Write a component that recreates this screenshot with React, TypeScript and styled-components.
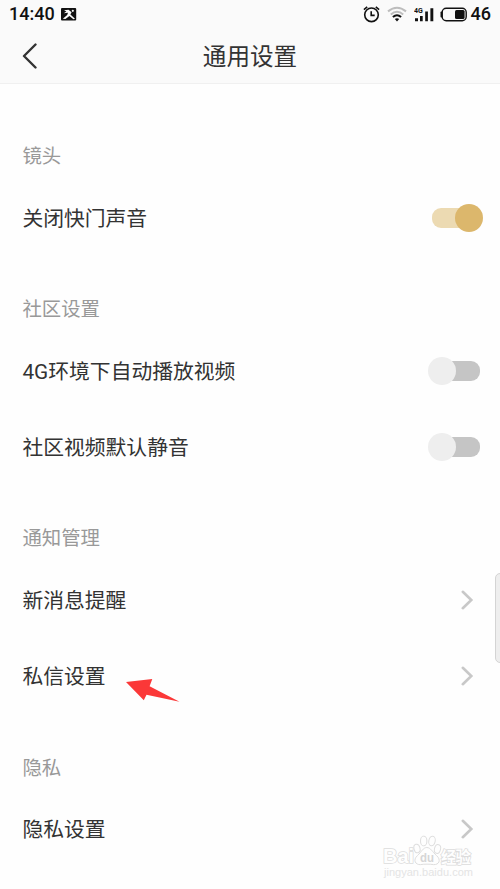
import React from "react";
import styled, { createGlobalStyle } from "styled-components";

const GlobalStyle = createGlobalStyle`
  * { box-sizing: border-box; }
  body {
    margin: 0;
    background: #fefefe;
    font-family: Roboto, "Noto Sans CJK SC", sans-serif;
    color: #333;
    overflow: hidden;
  }
  svg { display: block; flex: none; }
`;

const Screen = styled.div`
  position: relative;
  width: 500px;
  height: 889px;
  overflow: hidden;
  background: #fefefe;
`;

const Header = styled.header`
  height: 84px;
  background: #fafafa;
  border-bottom: 1px solid #f0f0f0;
`;

const StatusBar = styled.div`
  display: flex;
  align-items: center;
  justify-content: space-between;
  height: 28px;
  padding: 0 9px 0 9px;
  color: #111;
  font-size: 18px;
  font-weight: 500;
  line-height: 28px;
`;

const StatusGroup = styled.div<{ $gap: number }>`
  display: flex;
  align-items: center;
  gap: ${(p) => p.$gap}px;
`;

const TitleBar = styled.div`
  display: grid;
  grid-template-columns: 60px 1fr 60px;
  align-items: center;
  height: 55px;
`;

const BackButton = styled.button`
  border: 0;
  padding: 0 0 0 21px;
  background: none;
`;

const Title = styled.h1`
  margin: 0;
  padding-top: 3px;
  font-size: 23.6px;
  font-weight: 400;
  line-height: 36px;
  text-align: center;
`;

const List = styled.main`
  padding: 19.4px 17px 0 22.4px;
`;

const SectionLabel = styled.h2`
  height: 76.4px;
  margin: 0;
  padding-top: 30px;
  color: #999;
  font-size: 19.4px;
  font-weight: 400;
  line-height: 48.4px;
`;

const Row = styled.div`
  display: flex;
  align-items: center;
  justify-content: space-between;
  height: 76.4px;
  font-size: 20.8px;
  line-height: 32px;
`;

const RowLabel = styled.span`
  padding-top: 2px;
`;

const Track = styled.span<{ $on: boolean }>`
  display: flex;
  align-items: center;
  justify-content: ${(p) => (p.$on ? "flex-end" : "flex-start")};
  width: 48px;
  height: 20px;
  margin-right: 3.5px;
  border-radius: 9px;
  background: ${(p) => (p.$on ? "#ecdab2" : "#c5c5c5")};
`;

const Knob = styled.span<{ $on: boolean }>`
  flex: none;
  width: 28px;
  height: 28px;
  margin: ${(p) => (p.$on ? "0 -3.5px 0 0" : "0 0 0 -4px")};
  border-radius: 50%;
  background: ${(p) => (p.$on ? "#dcb76c" : "#eeeeee")};
`;

const ScrollHandle = styled.div`
  position: absolute;
  top: 573px;
  right: -8px;
  width: 13px;
  height: 90px;
  border: 1px solid #d4d4d4;
  border-radius: 5px;
  background: #eeeeee;
`;

const Pointer = styled.svg`
  position: absolute;
  top: 676px;
  left: 124px;
`;

const Watermark = styled.svg`
  position: absolute;
  top: 830px;
  left: 378px;
`;

const PhotoIcon = () => (
  <svg width="16" height="13" viewBox="0 0 16 13">
    <rect width="15.2" height="12.4" rx="1" fill="#111" />
    <path d="M3 2.2 7.5 1.8 10.6 4.2 9.4 6.6 14 10.8 12.4 11.2 8.4 8 4.4 11 1.8 10.8 6.2 7 7 4.8 2.8 5.2 5.4 3.6Z" fill="#fafafa" />
    <circle cx="11.8" cy="2.8" r="1.1" fill="#fafafa" />
  </svg>
);

const SpacedIcon = styled.svg`
  margin-right: 3px;
`;

const AlarmIcon = () => (
  <SpacedIcon width="17" height="17" viewBox="0 0 17 17" fill="none" stroke="#111" strokeWidth="1.6">
    <circle cx="8.5" cy="8.8" r="6.8" />
    <path d="M8.2 5.3V9.4H11.7M.9 3.6 4.2 .9M12.8 .9 16.1 3.6" />
  </SpacedIcon>
);

const WifiIcon = () => (
  <SpacedIcon width="20" height="16" viewBox="0 0 20 16" fill="none" strokeWidth="2">
    <path d="M1 5.4Q10-1.9 19 5.4" stroke="#bdbdbd" />
    <path d="M3.8 8.4Q10 3 16.2 8.4" stroke="#bdbdbd" />
    <path d="M5.9 11Q10 7.4 14.1 11" stroke="#111" />
    <path d="M7.8 13Q10 11.4 12.2 13L10 15.6Z" fill="#111" />
  </SpacedIcon>
);

const SignalText = styled.text`
  font: 700 7px Roboto, sans-serif;
  fill: #111;
`;

const SignalIcon = () => (
  <svg width="21" height="17" viewBox="0 0 21 17">
    <SignalText x="0" y="6.8">4G</SignalText>
    <path d="M1 12.2h3v3H1zM6 10h2.7v5.2H6zM11.2 5.5h2.7v9.7h-2.7zM16.4 2.3h2.9v12.9h-2.9z" fill="#111" />
  </svg>
);

const BatteryIcon = () => (
  <svg width="28" height="15" viewBox="0 0 28 15">
    <path d="M3.5 4.5H2.4Q1.5 4.5 1.5 5.5V9.5Q1.5 10.5 2.4 10.5H3.5" fill="#111" />
    <rect x="3.2" y="1.2" width="24" height="12.6" rx="4" fill="none" stroke="#111" strokeWidth="1.4" />
    <rect x="16" y="3" width="9.6" height="9" rx="1.5" fill="#111" />
  </svg>
);

const BackIcon = () => (
  <svg width="18" height="26" viewBox="0 0 18 26" fill="none" stroke="#333" strokeWidth="2.4">
    <path d="M14.5 1.5 3 13 14.5 24.5" strokeLinecap="round" strokeLinejoin="round" />
  </svg>
);

const ArrowIcon = styled.svg`
  margin-right: 9px;
`;

const Chevron = () => (
  <ArrowIcon width="14" height="20" viewBox="0 0 14 20" fill="none" stroke="#c8c8c8" strokeWidth="2.6">
    <path d="M2.8 1.8 11.3 10 2.8 18.2" strokeLinecap="round" />
  </ArrowIcon>
);

const Toggle = ({ on = false }: { on?: boolean }) => (
  <Track $on={on} role="switch" aria-checked={on}>
    <Knob $on={on} />
  </Track>
);

const WatermarkText = styled.text<{ $size: number }>`
  font-family: "Liberation Sans", "Noto Sans CJK SC", sans-serif;
  font-size: ${(p) => p.$size}px;
  font-weight: 700;
  fill: #fefefe;
  stroke: #dcdcdc;
  stroke-width: 1.5px;
  paint-order: stroke;
`;

const PawText = styled.text`
  font: 700 13px "Liberation Sans", sans-serif;
  fill: #d6d6d6;
`;

const UrlText = styled.text`
  font: 400 11px "Liberation Sans", sans-serif;
  fill: #e4e4e4;
`;

type Item = { label: string; toggle?: boolean };

const sections: { title: string; items: Item[] }[] = [
  { title: "镜头", items: [{ label: "关闭快门声音", toggle: true }] },
  {
    title: "社区设置",
    items: [
      { label: "4G环境下自动播放视频", toggle: false },
      { label: "社区视频默认静音", toggle: false },
    ],
  },
  { title: "通知管理", items: [{ label: "新消息提醒" }, { label: "私信设置" }] },
  { title: "隐私", items: [{ label: "隐私设置" }] },
];

export default function App() {
  return (
    <Screen>
      <GlobalStyle />
      <Header>
        <StatusBar>
          <StatusGroup $gap={6}>
            <span>14:40</span>
            <PhotoIcon />
          </StatusGroup>
          <StatusGroup $gap={4}>
            <AlarmIcon />
            <WifiIcon />
            <SignalIcon />
            <BatteryIcon />
            <span>46</span>
          </StatusGroup>
        </StatusBar>
        <TitleBar>
          <BackButton aria-label="返回">
            <BackIcon />
          </BackButton>
          <Title>通用设置</Title>
        </TitleBar>
      </Header>
      <List>
        {sections.map((section) => (
          <section key={section.title}>
            <SectionLabel>{section.title}</SectionLabel>
            {section.items.map((item) => (
              <Row key={item.label}>
                <RowLabel>{item.label}</RowLabel>
                {item.toggle === undefined ? <Chevron /> : <Toggle on={item.toggle} />}
              </Row>
            ))}
          </section>
        ))}
      </List>
      <ScrollHandle />
      <Pointer width="58" height="28" viewBox="0 0 58 28">
        <path d="M2 6 28.3 3 25.6 10.3 55.5 25.8 22.5 18.8 19.8 24.2Z" fill="#fb3838" />
      </Pointer>
      <Watermark width="100" height="52" viewBox="0 0 100 52">
        <WatermarkText x="5" y="33" $size={20} textLength="31">Bai</WatermarkText>
        <g fill="#fefefe" stroke="#dedede" strokeWidth="1">
          <ellipse cx="39" cy="18.5" rx="3" ry="4.3" transform="rotate(-15 39 18.5)" />
          <ellipse cx="45.7" cy="11" rx="3.2" ry="4.8" />
          <ellipse cx="54" cy="11" rx="3.2" ry="4.8" transform="rotate(12 54 11)" />
          <ellipse cx="59.5" cy="19" rx="3" ry="4.5" transform="rotate(15 59.5 19)" />
          <path d="M48.8 17.5C45 17.5 43.5 22 39.5 25.5C34.5 30 37.5 35 42.5 34.6C46.5 34 51.5 34 55.5 34.6C61 35 63.5 30 58.5 25.5C54.5 22 52.6 17.5 48.8 17.5Z" />
        </g>
        <PawText x="42" y="32" textLength="14" lengthAdjust="spacingAndGlyphs">du</PawText>
        <WatermarkText x="63" y="33" $size={15.5} textLength="30">经验</WatermarkText>
        <UrlText x="6" y="45.5" textLength="89">jingyan.baidu.com</UrlText>
      </Watermark>
    </Screen>
  );
}
